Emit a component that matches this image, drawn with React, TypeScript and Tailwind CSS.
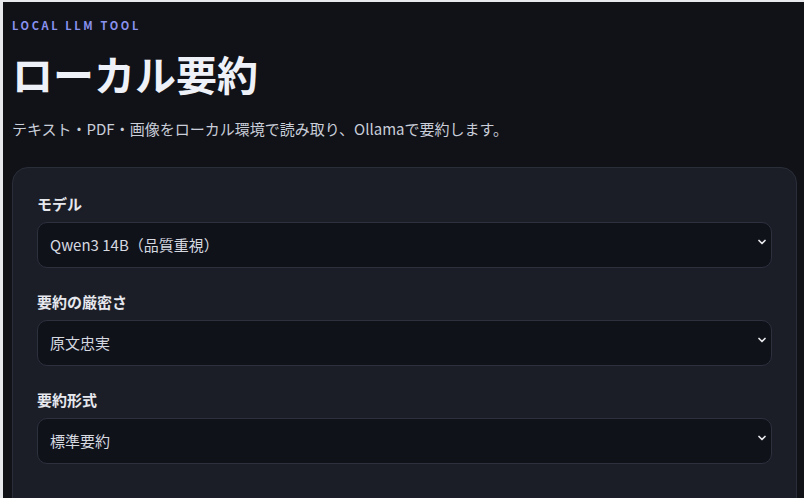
const fields = [
  { label: 'モデル', value: 'Qwen3 14B（品質重視）', options: ['Qwen3 14B（品質重視）', 'Qwen3 8B（速度重視）'] },
  { label: '要約の厳密さ', value: '原文忠実', options: ['原文忠実', 'バランス', '大胆に要約'] },
  { label: '要約形式', value: '標準要約', options: ['標準要約', '箇条書き', '3行要約'] },
];

const SelectField = ({ label, value, options }: { label: string; value: string; options: string[] }) => (
  <div className="flex flex-col gap-[8px]">
    <label className="text-[15px] leading-5 font-bold text-[#e6e8ee]">{label}</label>
    <div className="relative">
      <select
        defaultValue={value}
        className="w-full h-[46px] appearance-none rounded-[10px] border border-[#2c313d] bg-[#10121a] pl-3 pr-8 text-[15px] text-[#d6d9e0] outline-none"
      >
        {options.map((o) => (
          <option key={o}>{o}</option>
        ))}
      </select>
      <svg
        className="pointer-events-none absolute right-[6px] top-[17px] w-[8px] h-[6px] text-[#e5e7eb]"
        viewBox="0 0 8 6"
        fill="none"
      >
        <path d="M1 1.5l3 3 3-3" stroke="currentColor" strokeWidth="1.7" strokeLinecap="round" strokeLinejoin="round" />
      </svg>
    </div>
  </div>
);

export default function App() {
  return (
    <div
      className="h-screen overflow-hidden bg-[#e8e9ec] pt-[2px] pl-[3px]"
      style={{ fontFamily: '"Noto Sans CJK JP", "Noto Sans", sans-serif' }}
    >
      <div className="h-full bg-[#111218] pl-[9px] pr-[7px] pt-[15px]">
        <p className="text-[11px] leading-4 font-bold tracking-[0.24em] text-[#8a92f0]">LOCAL LLM TOOL</p>
        <h1 className="mt-[14px] text-[41px] leading-[52px] font-bold text-[#eef1f7]">ローカル要約</h1>
        <p className="mt-[18px] text-[15px] leading-6 text-[#c9ced8]">
          テキスト・PDF・画像をローカル環境で読み取り、Ollamaで要約します。
        </p>
        <div className="mt-[26px] rounded-[16px] border border-[#2a2e39] bg-[#1b1e27] px-6 pt-[26px] pb-16 flex flex-col gap-6">
          {fields.map((f) => (
            <SelectField key={f.label} {...f} />
          ))}
        </div>
      </div>
    </div>
  );
}
